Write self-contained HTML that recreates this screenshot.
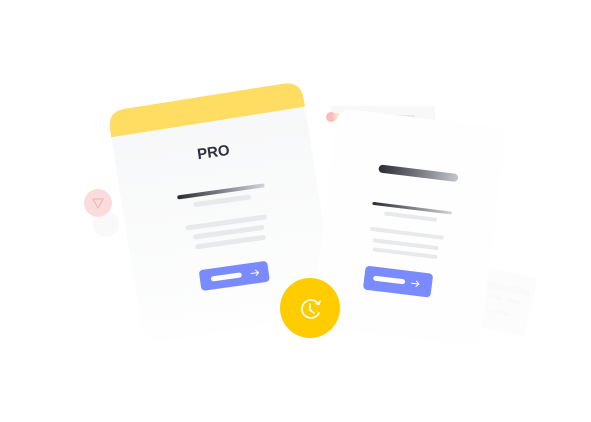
<!DOCTYPE html>
<html><head><meta charset="utf-8"><style>
html,body{margin:0;padding:0;background:#fff;width:591px;height:422px;overflow:hidden}
svg{display:block}
</style></head><body>
<svg width="591" height="422" viewBox="0 0 591 422" xmlns="http://www.w3.org/2000/svg">
<defs>
<linearGradient id="g1" x1="0" x2="1" y1="0" y2="0"><stop offset="0" stop-color="#2a2b33"/><stop offset="1" stop-color="#d2d4d8"/></linearGradient>
<linearGradient id="g2" x1="0" x2="1" y1="0" y2="0"><stop offset="0" stop-color="#2a2b33"/><stop offset="1" stop-color="#c3c6ca"/></linearGradient>
<linearGradient id="lc" x1="0" x2="0" y1="0" y2="1"><stop offset="0" stop-color="#f6f7f8"/><stop offset="1" stop-color="#fefefe"/></linearGradient>
</defs>
<g transform="rotate(12 505 300)" opacity="0.35">
<rect x="480" y="272" width="52" height="60" fill="#f8f8fa"/>
<rect x="484" y="285" width="44" height="6" fill="#eeeff3"/>
<rect x="488" y="298" width="14" height="3" fill="#eeeff3"/><rect x="508" y="298" width="12" height="3" fill="#eeeff3"/>
<rect x="490" y="312" width="22" height="3" fill="#eeeff3"/>
</g>
<g opacity="0.9">
<rect x="330" y="106" width="105" height="14" fill="#f8f8f9"/>
<circle cx="331" cy="117" r="5" fill="#f6b8b8"/>
<circle cx="337" cy="117" r="4" fill="#fbd8b0" opacity="0.8"/>
<rect x="350" y="115" width="65" height="3" rx="1.5" fill="#e4e5e8"/>
</g>
<circle cx="106" cy="224" r="13" fill="#f9f9fa"/>
<circle cx="98" cy="203" r="14" fill="#fbdcdc"/>
<path d="M93 199 L103 199 L98 208 Z" fill="none" stroke="#f2b6b6" stroke-width="1.2" stroke-linejoin="round"/>
<!-- left card -->
<g transform="translate(10 -3) rotate(-9 210 200)">
<rect x="112" y="98" width="196" height="235" rx="18" fill="url(#lc)"/>
<path d="M112 124 V116 Q112 98 130 98 H290 Q308 98 308 116 V124 Z" fill="#ffdc62"/>
</g>
<g transform="rotate(-8 210 200)">
<text x="220" y="158" font-family="Liberation Sans, sans-serif" font-weight="bold" font-size="15" fill="#2f313b" text-anchor="middle">PRO</text>
<g transform="translate(8 -6)"><rect x="170" y="197" width="88" height="4" rx="2" fill="url(#g1)"/>
<rect x="185" y="206" width="58" height="5" rx="2.5" fill="#e8e9eb"/></g>
<g transform="translate(4 -4)">
<rect x="178" y="226" width="82" height="5" rx="2.5" fill="#e8e9eb"/>
<rect x="184" y="236" width="72" height="5" rx="2.5" fill="#e8e9eb"/>
<rect x="185" y="246" width="71" height="5" rx="2.5" fill="#e8e9eb"/></g>
<g transform="translate(-8 -8)">
<rect x="197" y="276" width="69" height="21" rx="4" fill="#7a8bff"/>
<rect x="208" y="284" width="31" height="5" rx="2.5" fill="#fff"/>
<path d="M248 286.5 H256 M253 283.5 L256 286.5 L253 289.5" stroke="#fff" stroke-width="1" fill="none"/></g>
</g>
<!-- right card -->
<g transform="rotate(7 405 225)">
<rect x="324" y="117" width="170" height="220" rx="14" fill="#fefefe"/>
<rect x="372" y="168" width="80" height="8" rx="4" fill="url(#g2)"/>
<rect x="370" y="206" width="80" height="3" rx="1.5" fill="url(#g1)"/>
<rect x="383" y="214" width="53" height="4" rx="2" fill="#e8e9eb"/>
<rect x="371" y="231" width="74" height="4" rx="2" fill="#e8e9eb"/>
<rect x="375" y="242" width="66" height="4" rx="2" fill="#e8e9eb"/>
<rect x="376" y="251" width="65" height="4" rx="2" fill="#e8e9eb"/>
<rect x="371" y="270" width="68" height="24" rx="4" fill="#7a8bff"/>
<rect x="380" y="279" width="32" height="5" rx="2.5" fill="#fff"/>
<path d="M418 282 H426 M423 279 L426 282 L423 285" stroke="#fff" stroke-width="1" fill="none"/>
</g>
<circle cx="310" cy="308" r="30" fill="#ffcc00"/>
<path d="M318.5 304 A9 9 0 1 0 319 313" fill="none" stroke="#fff" stroke-width="1.6" stroke-linecap="round"/>
<path d="M316 303.5 L319 304.5 L320 301" fill="none" stroke="#fff" stroke-width="1.6" stroke-linecap="round" stroke-linejoin="round"/>
<path d="M310 304 V310 L314 313" fill="none" stroke="#fff" stroke-width="1.6" stroke-linecap="round" stroke-linejoin="round"/>
</svg>
</body></html>
